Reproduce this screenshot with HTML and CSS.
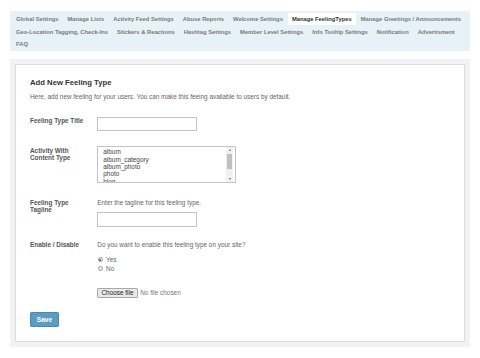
FILE: index.html
```html
<!DOCTYPE html>
<html lang="en">
<head>
<meta charset="utf-8">
<title>Manage Feeling Types</title>
<link rel="stylesheet" href="styles.css">
</head>
<body>
<nav class="tabs">
  <a class="tab">Global Settings</a>
  <a class="tab">Manage Lists</a>
  <a class="tab">Activity Feed Settings</a>
  <a class="tab">Abuse Reports</a>
  <a class="tab">Welcome Settings</a>
  <a class="tab active">Manage FeelingTypes</a>
  <a class="tab">Manage Greetings / Announcements</a>
  <a class="tab">Geo-Location Tagging, Check-Ins</a>
  <a class="tab">Stickers &amp; Reactions</a>
  <a class="tab">Hashtag Settings</a>
  <a class="tab">Member Level Settings</a>
  <a class="tab">Info Tooltip Settings</a>
  <a class="tab">Notification</a>
  <a class="tab">Advertisment</a>
  <a class="tab">FAQ</a>
</nav>

<main class="panel">
  <form class="box">
    <h3 class="title">Add New Feeling Type</h3>
    <p class="intro">Here, add new feeling for your users. You can make this feeing available to users by default.</p>

    <div class="row row-first">
      <label class="label">Feeling Type Title</label>
      <div class="field"><input class="text" type="text"></div>
    </div>

    <div class="row row-list">
      <label class="label">Activity With Content Type</label>
      <div class="field">
        <div class="listbox" role="listbox">
          <div class="options">
            <div class="opt">album</div>
            <div class="opt">album_category</div>
            <div class="opt">album_photo</div>
            <div class="opt">photo</div>
            <div class="opt">blog</div>
          </div>
          <div class="sbar">
            <span class="arrow up"></span>
            <span class="track"><span class="thumb"></span></span>
            <span class="arrow down"></span>
          </div>
        </div>
      </div>
    </div>

    <div class="row row-tag">
      <label class="label">Feeling Type Tagline</label>
      <div class="field">
        <p class="hint">Enter the tagline for this feeling type.</p>
        <input class="text" type="text">
      </div>
    </div>

    <div class="row row-enable">
      <label class="label">Enable / Disable</label>
      <div class="field">
        <p class="hint">Do you want to enable this feeling type on your site?</p>
        <ul class="radios">
          <li><span class="radio on"></span>Yes</li>
          <li><span class="radio"></span>No</li>
        </ul>
      </div>
    </div>

    <div class="row row-file">
      <span class="label"></span>
      <div class="field file">
        <span class="file-btn">Choose file</span>
        <span class="file-name">No file chosen</span>
      </div>
    </div>

    <div class="actions">
      <button class="save" type="button">Save</button>
    </div>
  </form>
</main>
</body>
</html>
```

FILE: styles.css
```css
* { box-sizing: border-box; }

body {
  margin: 0;
  padding: 11px 10px 0;
  background: #ffffff;
  font-family: "Liberation Sans", Arial, sans-serif;
  font-size: 6.4px;
  color: #555;
}

.tabs {
  display: flex;
  flex-wrap: wrap;
  background: #e6f1f8;
  padding: 1.5px 2px 1px;
}

.tab {
  font-weight: bold;
  font-size: 5.8px;
  line-height: 6px;
  padding: 3.5px 4px 3px;
  margin-right: 1px;
  color: #7a7a7a;
  white-space: nowrap;
}

.tab.active {
  background: #ffffff;
  color: #333;
}

.panel {
  display: block;
  margin-top: 7.5px;
  background: #f2f2f2;
  padding: 5px 5px 5.5px;
}

.box {
  background: #fff;
  border: 1px solid #dcdcdc;
  padding: 13.5px 14px 14px;
  margin: 0;
}

.title {
  margin: 0;
  font-size: 7.7px;
  line-height: 9px;
  font-weight: bold;
  color: #333;
}

.intro {
  margin: 5.8px 0 0;
  line-height: 8px;
  color: #666;
}

.row {
  display: flex;
  margin-top: 15px;
}

.row-first { margin-top: 16px; }

.label {
  width: 57px;
  flex: none;
  margin-right: 10.3px;
  font-weight: bold;
  line-height: 7.4px;
  padding-top: 0.6px;
  color: #555;
}

.field { flex: none; }

.text {
  display: block;
  width: 99.5px;
  height: 14.5px;
  border: 1px solid #c4c4c4;
  background: #fff;
  padding: 0;
  margin: 0;
  font: inherit;
}

.listbox {
  display: flex;
  width: 138.4px;
  height: 36.6px;
  border: 1px solid #c4c4c4;
  background: #fff;
}

.options {
  flex: 1;
  overflow: hidden;
  padding: 0.9px 0 0 5px;
  color: #444;
}

.opt { line-height: 7.4px; }

.sbar {
  width: 6.8px;
  margin-right: 1.5px;
  display: flex;
  flex-direction: column;
  align-items: center;
  background: #f1f1f1;
}

.arrow {
  width: 0;
  height: 0;
  border-left: 1.6px solid transparent;
  border-right: 1.6px solid transparent;
}
.arrow.up { border-bottom: 2px solid #606060; margin: 1.6px 0 2px; }
.arrow.down { border-top: 2px solid #606060; margin: 2px 0 1.6px; }

.track {
  flex: 1;
  width: 100%;
  display: flex;
  justify-content: center;
}

.thumb {
  width: 5px;
  height: 15.3px;
  margin-top: 1px;
  background: #c1c1c1;
}

.row-tag { margin-top: 15.3px; }
.row-enable { margin-top: 14px; }

.hint {
  margin: 0;
  line-height: 7.4px;
  padding-top: 0.6px;
  color: #666;
}

.row-tag .text { margin-top: 6px; }

.radios {
  list-style: none;
  margin: 6.5px 0 0;
  padding: 0;
  color: #666;
}

.radios li {
  display: flex;
  align-items: center;
  height: 9px;
  line-height: 9px;
}

.radio {
  width: 5px;
  height: 5px;
  border-radius: 50%;
  border: 0.6px solid #9a9a9a;
  background: #f4f4f4;
  margin: 0 3.2px 0 0.6px;
  display: flex;
  align-items: center;
  justify-content: center;
}

.radio.on::after {
  content: "";
  width: 2.2px;
  height: 2.2px;
  border-radius: 50%;
  background: #555;
}

.row-file { margin-top: 14.5px; }

.file {
  display: flex;
  align-items: center;
}

.file-btn {
  display: block;
  height: 10px;
  width: 40.4px;
  line-height: 8px;
  text-align: center;
  border: 1px solid #a9a9a9;
  background: #e9e9e9;
  color: #222;
  border-radius: 1px;
}

.file-name {
  margin-left: 2.5px;
  color: #777;
}

.actions { margin-top: 14.6px; }

.save {
  display: block;
  width: 29px;
  height: 14.4px;
  padding: 0;
  border: 0.6px solid #4b88ad;
  border-radius: 1.2px;
  background: #5d9cc2;
  color: #fff;
  font: inherit;
  font-weight: bold;
  font-size: 6.6px;
}
```
